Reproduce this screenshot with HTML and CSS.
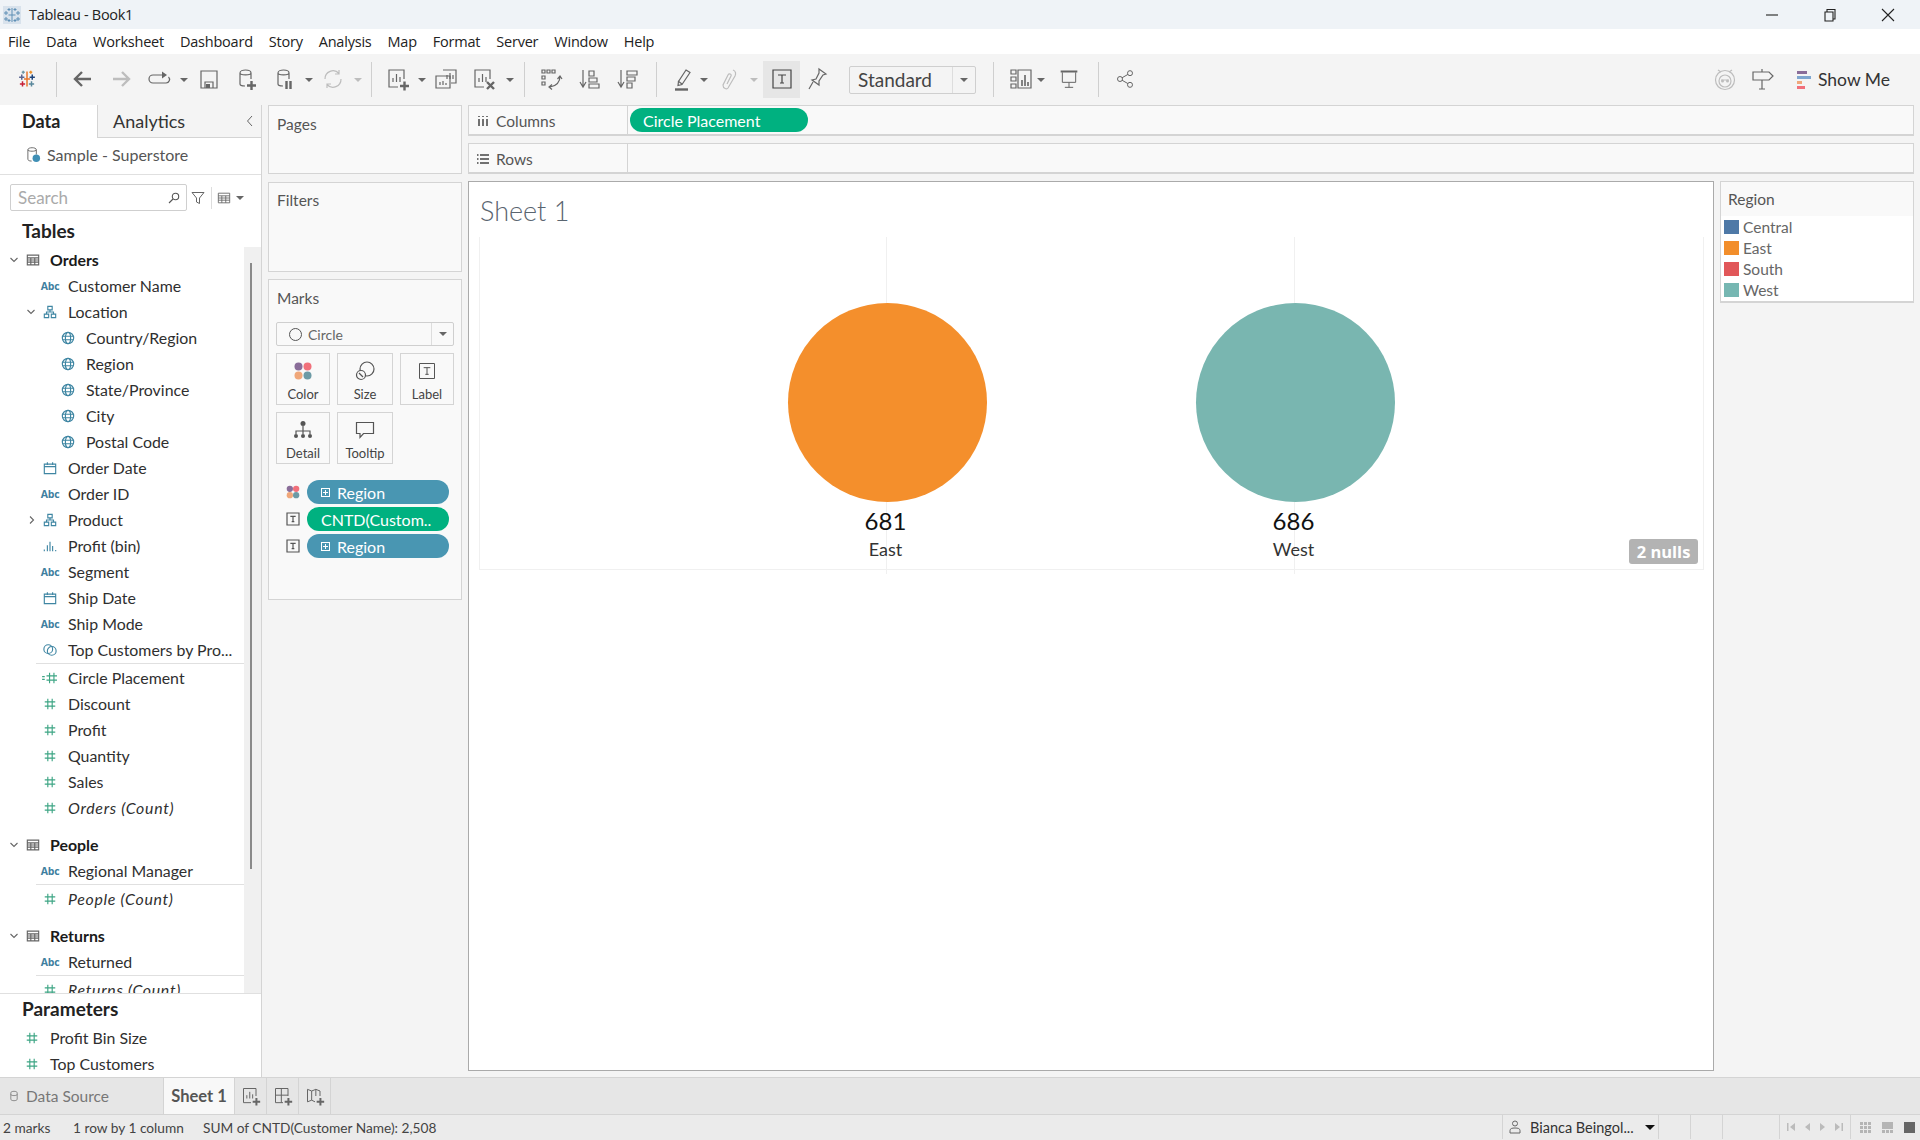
FILE: index.html
```html
<!DOCTYPE html>
<html lang="en">
<head>
    <meta charset="UTF-8">
    <meta name="viewport" content="width=device-width, initial-scale=1.0">
    <title>Tableau - Book1</title>
    <link rel="stylesheet" href="styles.css">
</head>
<body>
    <svg class="sprite">
        <symbol id="i-hash" viewBox="0 0 16 16"><path d="M5.5 2v12M10.5 2v12M2 5.5h12M2 10.5h12"/></symbol>
        <symbol id="i-calc" viewBox="0 0 20 16"><path d="M9.5 2v12M14.5 2v12M6 5.5h12M6 10.5h12M1 6.5h3M1 9.5h3"/></symbol>
        <symbol id="i-globe" viewBox="0 0 16 16"><circle cx="8" cy="8" r="6.5"/><ellipse cx="8" cy="8" rx="3" ry="6.5"/><path d="M2 6h12M2 10h12"/></symbol>
        <symbol id="i-hier" viewBox="0 0 16 16"><path d="M5.5 1.5h5v4h-5zM1.500 10.500h5v4h-5zM9.500 10.500h5v4h-5zM8 5.500V8M4 10.500V8h8v2.500"/></symbol>
        <symbol id="i-cal" viewBox="0 0 16 16"><path d="M1.500 3.500h13v11h-13zM1.500 6.500h13M5 1.500v3M11 1.500v3"/></symbol>
        <symbol id="i-table" viewBox="0 0 16 16"><path d="M1.500 2.500h13v11h-13zM1.500 5.500h13M1.500 8h13M1.500 10.500h13M5.500 5.500v8M10 5.500v8"/></symbol>
        <symbol id="i-bin" viewBox="0 0 16 16"><path d="M1.500 14v-2M5 14V7M8 14V3M11 14V8M14.500 14v-1.500"/></symbol>
        <symbol id="i-set" viewBox="0 0 16 16"><circle cx="6" cy="7" r="5"/><circle cx="10" cy="9" r="5"/></symbol>
        <symbol id="i-dbplus" viewBox="0 0 24 24"><path d="M5 6c0-4 11-4 11 0v6M5 6c0 2.500 11 2.500 11 0M5 6v11c0 1.500 2 2 5 2"/><path class="thick" d="M12 18.500h9M16.500 14v9"/></symbol>
        <symbol id="i-dbpause" viewBox="0 0 24 24"><path d="M5 6c0-4 11-4 11 0v6M5 6c0 2.500 11 2.500 11 0M5 6v11c0 1.500 2 2 5 2"/><path class="thick" d="M13.500 14v8M17.500 14v8"/></symbol>
        <symbol id="i-back" viewBox="0 0 24 24"><path class="thick" d="M20 12H4M11 5l-7 7 7 7"/></symbol>
        <symbol id="i-forward" viewBox="0 0 24 24"><path class="thick" d="M4 12h16M13 5l7 7-7 7"/></symbol>
        <symbol id="i-replay" viewBox="0 0 24 24"><path d="M15 8H6a3.500 3.500 0 0 0 0 8h13a3.500 3.500 0 0 0 2.500-6"/><path class="solid" d="M15 4.500l5 3.500-5 3.500z"/></symbol>
        <symbol id="i-save" viewBox="0 0 24 24"><path d="M4 4h16v17H4zM8 21v-6h8v6"/><path class="solid" d="M9 17h4v4H9z"/></symbol>
        <symbol id="i-refresh" viewBox="0 0 24 24"><path d="M4 12a8 8 0 0 1 14-5.500M20 12a8 8 0 0 1-14 5.500M18 3v4h-4M6 21v-4h4"/></symbol>
        <symbol id="i-sheetadd" viewBox="0 0 24 24"><path d="M12 20H3V3h15v9"/><path d="M7 15v-4M10.500 15V7M14 15v-5"/><path class="thick" d="M14 19h9M18.500 14.500v9"/></symbol>
        <symbol id="i-dup" viewBox="0 0 24 24"><path d="M9 3h13v13h-5M2 9h14v12H2z"/><path d="M13 12V8M16 12V6M19 12V8M6 18v-3M9 18v-4M12 18v-2"/></symbol>
        <symbol id="i-clear" viewBox="0 0 24 24"><path d="M12 20H3V3h15v9"/><path d="M7 15v-4M10.500 15V7M14 15v-5"/><path class="thick" d="M15 15l7 7M22 15l-7 7"/></symbol>
        <symbol id="i-swap" viewBox="0 0 24 24"><path d="M3 3h3v3H3zM8 3h3v3H8zM13 3h3v3h-3zM3 9h3v3H3zM3 15h3v3H3z"/><path d="M21 9c0 6-4 10-10 11M18.500 12l2.500-3 2 3M13 17.500L10 20l3 2.500"/></symbol>
        <symbol id="i-sortasc" viewBox="0 0 24 24"><path d="M6 3v16M3 15l3 5 3-5"/><path d="M12 4h5v5h-5zM12 11h8v4h-8zM12 17h10v4H12z"/></symbol>
        <symbol id="i-sortdesc" viewBox="0 0 24 24"><path d="M6 3v16M3 15l3 5 3-5"/><path d="M12 4h10v4H12zM12 10h8v4h-8zM12 16h5v5h-5z"/></symbol>
        <symbol id="i-pencil" viewBox="0 0 24 24"><path d="M15 3l4 2.500-8 12-4 1 .500-4zM7 14l4 3"/><path class="thick" d="M4 22.500h13"/></symbol>
        <symbol id="i-clip" viewBox="0 0 24 24"><path d="M16 3c3 1 3 4 2 6l-7 12c-1 1.500-5 1-5-3l5-10c1-2 4-1 3 1l-4 8"/></symbol>
        <symbol id="i-tbox" viewBox="0 0 24 24"><path d="M3 3h18v18H3zM8 8h8M12 8v8M10 16h4"/></symbol>
        <symbol id="i-pin" viewBox="0 0 24 24"><path d="M14 2l7 5-3 1-4 6 0 4-7-5 4-1 3-6zM8 15l-4 7"/></symbol>
        <symbol id="i-showme" viewBox="0 0 24 24"><path d="M3 3h5v4H3zM3 10h5v4H3zM3 17h5v4H3zM10 3h13v18H10z"/><path class="thin" d="M14 19v-6M17 19V8M20 19v-4"/></symbol>
        <symbol id="i-present" viewBox="0 0 24 24"><path class="thick" d="M2 3h20"/><path d="M4 4v12h16V4M12 16v6M7 22h10"/></symbol>
        <symbol id="i-share" viewBox="0 0 24 24"><circle cx="18" cy="5" r="3"/><circle cx="6" cy="12" r="3"/><circle cx="18" cy="19" r="3"/><path d="M8.500 10.500l7-4M8.500 13.500l7 4"/></symbol>
        <symbol id="i-sign" viewBox="0 0 24 24"><path d="M2 5h16l4 4-4 4H2zM11 13v9M8 22h6M11 2v3"/></symbol>
        <symbol id="i-robot" viewBox="0 0 24 24"><circle cx="12" cy="13" r="9.500"/><circle cx="12" cy="14" r="6"/><path d="M8 13h8M5 3l3 2M19 3l-3 2"/><circle class="solid" cx="9.500" cy="14" r="1.500"/><circle class="solid" cx="14.500" cy="14" r="1.500"/></symbol>
    </svg>

    <div class="titlebar">
        <svg class="app-logo" viewBox="0 0 18 18">
            <rect width="18" height="18" fill="#d8e2ec"/>
            <path d="M9 2v14M5.500 9h7M3 5v4M1 7h4M15 5v4M13 7h4M3 11v4M1 13h4M15 11v4M13 13h4M6 2v3M4.500 3.500h3M12 2v3M10.500 3.500h3M6 13v3M4.500 14.500h3M12 13v3M10.500 14.500h3" fill="none" stroke="#5e8fb5"/>
        </svg>
        <span class="app-title">Tableau - Book1</span>
        <div class="winctl">
            <svg viewBox="0 0 14 14"><path d="M1 7h12"/></svg>
            <svg viewBox="0 0 14 14"><path d="M2 4h8v9H2zM4 4V1.500h8V11h-2"/></svg>
            <svg viewBox="0 0 14 14"><path d="M1 1l12 12M13 1L1 13"/></svg>
        </div>
    </div>

    <div class="menubar">
        <span>File</span><span>Data</span><span>Worksheet</span><span>Dashboard</span><span>Story</span><span>Analysis</span><span>Map</span><span>Format</span><span>Server</span><span>Window</span><span>Help</span>
    </div>

    <div class="toolbar">
        <div class="tool">
            <svg class="logo" viewBox="0 0 24 24">
                <path d="M12 2v20M8 12h8" stroke="#e8762d"/><path d="M5 6v7M1.500 9.500h7" stroke="#5b6591"/><path d="M19 6v7M15.500 9.500h7" stroke="#1f447a"/><path d="M6 15v7M2.500 18.500h7" stroke="#c72037"/><path d="M18 15v7M14.500 18.500h7" stroke="#59879b"/><path d="M7 1v4M5 3h4" stroke="#7099a6"/><path d="M17 1v4M15 3h4" stroke="#eb912b"/>
            </svg>
        </div>
        <i class="sep first"></i>
        <div class="tool"><svg><use href="#i-back"/></svg></div>
        <div class="tool off"><svg><use href="#i-forward"/></svg></div>
        <div class="tool"><svg><use href="#i-replay"/></svg></div>
        <i class="caret"></i>
        <div class="tool"><svg><use href="#i-save"/></svg></div>
        <div class="tool"><svg><use href="#i-dbplus"/></svg></div>
        <div class="tool"><svg><use href="#i-dbpause"/></svg></div>
        <i class="caret tight"></i>
        <div class="tool off"><svg><use href="#i-refresh"/></svg></div>
        <i class="caret off"></i>
        <i class="sep"></i>
        <div class="tool"><svg><use href="#i-sheetadd"/></svg></div>
        <i class="caret tight"></i>
        <div class="tool"><svg><use href="#i-dup"/></svg></div>
        <div class="tool"><svg><use href="#i-clear"/></svg></div>
        <i class="caret loose"></i>
        <i class="sep"></i>
        <div class="tool"><svg><use href="#i-swap"/></svg></div>
        <div class="tool"><svg><use href="#i-sortasc"/></svg></div>
        <div class="tool"><svg><use href="#i-sortdesc"/></svg></div>
        <i class="sep wide"></i>
        <div class="tool"><svg><use href="#i-pencil"/></svg></div>
        <i class="caret pull"></i>
        <div class="tool off"><svg><use href="#i-clip"/></svg></div>
        <i class="caret off"></i>
        <div class="tool active"><svg><use href="#i-tbox"/></svg></div>
        <div class="tool pin"><svg><use href="#i-pin"/></svg></div>
        <div class="fit-select"><span>Standard</span><b><i class="caret"></i></b></div>
        <i class="sep"></i>
        <div class="tool"><svg><use href="#i-showme"/></svg></div>
        <i class="caret pull"></i>
        <div class="tool push sm"><svg><use href="#i-present"/></svg></div>
        <i class="sep after-present"></i>
        <div class="tool sm"><svg><use href="#i-share"/></svg></div>
        <div class="toolbar-right">
            <div class="tool off"><svg><use href="#i-robot"/></svg></div>
            <div class="tool"><svg><use href="#i-sign"/></svg></div>
            <div class="showme">
                <svg viewBox="0 0 14 18"><rect width="10" height="3" fill="#8a6d99"/><rect y="5" width="14" height="3" fill="#7fa6cf"/><rect y="10" width="5" height="3" fill="#f0a77a"/><rect y="15" width="8" height="3" fill="#f1707b"/></svg>
                Show Me
            </div>
        </div>
    </div>

    <div class="main">
        <aside class="data-pane">
            <div class="tabs">
                <div class="tab on">Data</div>
                <div class="tab">Analytics<svg viewBox="0 0 8 12"><path d="M6 1L1.500 6 6 11"/></svg></div>
            </div>
            <div class="source">
                <svg class="src-ico" viewBox="0 0 16 18"><path d="M2 4c0-3 9-3 9 0v5M2 4c0 2 9 2 9 0M2 4v10c0 1 1 2 4 2" fill="none" stroke="#666"/><circle cx="11" cy="13" r="4" fill="#3f8fb5"/></svg>
                Sample - Superstore
            </div>
            <div class="search-row">
                <div class="search">Search
                    <svg viewBox="0 0 12 12"><circle cx="7.500" cy="4.500" r="3.200"/><path d="M5 7l-4 4"/></svg>
                </div>
                <svg class="funnel" viewBox="0 0 14 14"><path d="M1 1.500h12L8.500 7v5.500L5.500 11V7z"/></svg>
                <i class="vline"></i>
                <svg class="listview"><use href="#i-table"/></svg>
                <i class="caret"></i>
            </div>
            <h3 class="pane-head">Tables</h3>
            <div class="tree-wrap">
                <div class="tree">
                    <div class="row l0"><i class="chev"><svg viewBox="0 0 10 10"><path d="M1.500 3L5 6.500 8.500 3"/></svg></i><svg class="ico tbl"><use href="#i-table"/></svg><b>Orders</b></div>
                    <div class="row l1"><span class="abc">Abc</span>Customer Name</div>
                    <div class="row l1p"><i class="chev"><svg viewBox="0 0 10 10"><path d="M1.500 3L5 6.500 8.500 3"/></svg></i><svg class="ico dim"><use href="#i-hier"/></svg>Location</div>
                    <div class="row l2"><svg class="ico dim"><use href="#i-globe"/></svg>Country/Region</div>
                    <div class="row l2"><svg class="ico dim"><use href="#i-globe"/></svg>Region</div>
                    <div class="row l2"><svg class="ico dim"><use href="#i-globe"/></svg>State/Province</div>
                    <div class="row l2"><svg class="ico dim"><use href="#i-globe"/></svg>City</div>
                    <div class="row l2"><svg class="ico dim"><use href="#i-globe"/></svg>Postal Code</div>
                    <div class="row l1"><svg class="ico dim"><use href="#i-cal"/></svg>Order Date</div>
                    <div class="row l1"><span class="abc">Abc</span>Order ID</div>
                    <div class="row l1p"><i class="chev"><svg viewBox="0 0 10 10"><path d="M4 1.500L7.500 5 4 8.500"/></svg></i><svg class="ico dim"><use href="#i-hier"/></svg>Product</div>
                    <div class="row l1"><svg class="ico dim"><use href="#i-bin"/></svg>Profit (bin)</div>
                    <div class="row l1"><span class="abc">Abc</span>Segment</div>
                    <div class="row l1"><svg class="ico dim"><use href="#i-cal"/></svg>Ship Date</div>
                    <div class="row l1"><span class="abc">Abc</span>Ship Mode</div>
                    <div class="row l1"><svg class="ico dim"><use href="#i-set"/></svg>Top Customers by Pro...</div>
                    <div class="rule"></div>
                    <div class="row l1"><svg class="ico mea calc"><use href="#i-calc"/></svg>Circle Placement</div>
                    <div class="row l1"><svg class="ico mea"><use href="#i-hash"/></svg>Discount</div>
                    <div class="row l1"><svg class="ico mea"><use href="#i-hash"/></svg>Profit</div>
                    <div class="row l1"><svg class="ico mea"><use href="#i-hash"/></svg>Quantity</div>
                    <div class="row l1"><svg class="ico mea"><use href="#i-hash"/></svg>Sales</div>
                    <div class="row l1 it"><svg class="ico mea"><use href="#i-hash"/></svg>Orders (Count)</div>

                    <div class="row l0 group"><i class="chev"><svg viewBox="0 0 10 10"><path d="M1.500 3L5 6.500 8.500 3"/></svg></i><svg class="ico tbl"><use href="#i-table"/></svg><b>People</b></div>
                    <div class="row l1"><span class="abc">Abc</span>Regional Manager</div>
                    <div class="rule"></div>
                    <div class="row l1 it"><svg class="ico mea"><use href="#i-hash"/></svg>People (Count)</div>

                    <div class="row l0 group"><i class="chev"><svg viewBox="0 0 10 10"><path d="M1.500 3L5 6.500 8.500 3"/></svg></i><svg class="ico tbl"><use href="#i-table"/></svg><b>Returns</b></div>
                    <div class="row l1"><span class="abc">Abc</span>Returned</div>
                    <div class="rule"></div>
                    <div class="row l1 it"><svg class="ico mea"><use href="#i-hash"/></svg>Returns (Count)</div>
                </div>
                <div class="scroll"><div class="thumb"></div></div>
            </div>
            <div class="params">
                <h3 class="pane-head">Parameters</h3>
                <div class="row p"><svg class="ico mea"><use href="#i-hash"/></svg>Profit Bin Size</div>
                <div class="row p"><svg class="ico mea"><use href="#i-hash"/></svg>Top Customers</div>
            </div>
        </aside>

        <section class="cards">
            <div class="card pages"><h4>Pages</h4></div>
            <div class="card filters"><h4>Filters</h4></div>
            <div class="card marks">
                <h4>Marks</h4>
                <div class="mark-type">
                    <span class="mt-label"><i class="ring"></i>Circle</span>
                    <b><i class="caret"></i></b>
                </div>
                <div class="mark-btns">
                    <div class="mbtn">
                        <svg viewBox="0 0 20 20"><circle cx="5.500" cy="5.500" r="4" fill="#8a6d99"/><circle cx="14.500" cy="5.500" r="4" fill="#f1707b"/><circle cx="5.500" cy="14.500" r="4" fill="#f0a77a"/><circle cx="14.500" cy="14.500" r="4" fill="#6c9aa5"/></svg>
                        Color
                    </div>
                    <div class="mbtn">
                        <svg class="ln" viewBox="0 0 20 20"><circle cx="12" cy="8" r="7"/><circle cx="6" cy="14" r="4.500" fill="#f9f9f9"/><path d="M4 12l4 4"/></svg>
                        Size
                    </div>
                    <div class="mbtn">
                        <svg class="ln" viewBox="0 0 24 24"><use href="#i-tbox"/></svg>
                        Label
                    </div>
                    <div class="mbtn">
                        <svg class="ln" viewBox="0 0 20 20"><circle class="solid" cx="10" cy="3.500" r="2.500"/><path d="M10 6v8M3 14v-3h14v3"/><circle class="solid" cx="3" cy="16" r="2"/><circle class="solid" cx="10" cy="16" r="2"/><circle class="solid" cx="17" cy="16" r="2"/></svg>
                        Detail
                    </div>
                    <div class="mbtn">
                        <svg class="ln" viewBox="0 0 20 20"><path d="M1.500 2.500h17v11h-10l-3.500 4v-4H1.500z"/></svg>
                        Tooltip
                    </div>
                </div>
                <div class="mark-pills">
                    <div class="mp">
                        <svg class="mp-ico" viewBox="0 0 20 20"><circle cx="5.500" cy="5.500" r="4.500" fill="#8a6d99"/><circle cx="14.500" cy="5.500" r="4.500" fill="#f1707b"/><circle cx="5.500" cy="14.500" r="4.500" fill="#f0a77a"/><circle cx="14.500" cy="14.500" r="4.500" fill="#6c9aa5"/></svg>
                        <div class="pill blue"><i class="plus"></i>Region</div>
                    </div>
                    <div class="mp">
                        <svg class="mp-ico ln" viewBox="0 0 24 24"><use href="#i-tbox"/></svg>
                        <div class="pill green">CNTD(Custom..</div>
                    </div>
                    <div class="mp">
                        <svg class="mp-ico ln" viewBox="0 0 24 24"><use href="#i-tbox"/></svg>
                        <div class="pill blue"><i class="plus"></i>Region</div>
                    </div>
                </div>
            </div>
        </section>

        <section class="work">
            <div class="shelf">
                <div class="shelf-label">
                    <svg viewBox="0 0 12 12"><path d="M2 1v1M2 4v7M6 1v1M6 4v7M10 1v1M10 4v7"/></svg>
                    Columns
                </div>
                <div class="pill green long">Circle Placement</div>
            </div>
            <div class="shelf">
                <div class="shelf-label">
                    <svg viewBox="0 0 12 12"><path d="M0 2h1.500M3 2h9M0 6h1.500M3 6h9M0 10h1.500M3 10h9"/></svg>
                    Rows
                </div>
            </div>
            <div class="stage">
                <div class="viz">
                    <h1 class="sheet-title">Sheet 1</h1>
                    <div class="plot">
                        <div class="mark east">
                            <div class="circle"></div>
                            <div class="val">681</div>
                            <div class="lbl">East</div>
                        </div>
                        <div class="mark west">
                            <div class="circle"></div>
                            <div class="val">686</div>
                            <div class="lbl">West</div>
                        </div>
                        <div class="nulls">2 nulls</div>
                    </div>
                </div>
                <div class="legend">
                    <div class="legend-head">Region</div>
                    <div class="legend-item"><i class="sw central"></i>Central</div>
                    <div class="legend-item"><i class="sw east-c"></i>East</div>
                    <div class="legend-item"><i class="sw south"></i>South</div>
                    <div class="legend-item"><i class="sw west-c"></i>West</div>
                </div>
            </div>
        </section>
    </div>

    <div class="tabbar">
        <div class="ds-tab">
            <svg viewBox="0 0 10 14"><path d="M1 3c0-2.500 8-2.500 8 0v8c0 2.500-8 2.500-8 0zM1 5c0 2 8 2 8 0"/></svg>
            Data Source
        </div>
        <div class="sheet-tab">Sheet 1</div>
        <div class="new-tab"><svg class="tab-ico"><use href="#i-sheetadd"/></svg></div>
        <div class="new-tab">
            <svg class="tab-ico" viewBox="0 0 24 24"><path d="M12 20H3V3h15v9M3 11h15M10 3v17"/><path class="thick" d="M14 19h9M18.500 14.500v9"/></svg>
        </div>
        <div class="new-tab">
            <svg class="tab-ico" viewBox="0 0 24 24"><path d="M12 19l-4-2-5 2V4l5 2 5-2 5 2v6M8 6v11M13 4v8"/><path class="thick" d="M14 19h9M18.500 14.500v9"/></svg>
        </div>
    </div>

    <div class="statusbar">
        <span class="st a">2 marks</span>
        <span class="st b">1 row by 1 column</span>
        <span class="st">SUM of CNTD(Customer Name): 2,508</span>
        <div class="st-right">
            <div class="st-cell user">
                <svg viewBox="0 0 12 14"><circle cx="6" cy="3.500" r="2.500"/><path d="M1 13v-2.500C1 8.500 3 8 6 8s5 .5 5 2.500V13z"/></svg>
                <span>Bianca Beingol...</span>
                <i class="caret dark"></i>
            </div>
            <div class="st-cell w32"></div>
            <div class="st-cell w32"></div>
            <div class="st-cell w57"></div>
            <div class="st-cell nav">
                <svg viewBox="0 0 10 10"><path d="M1 1h1.500v8H1zM9 1v8L4 5z"/></svg>
                <svg viewBox="0 0 10 10"><path d="M8 1v8L3 5z"/></svg>
                <svg viewBox="0 0 10 10"><path d="M2 1v8l5-4z"/></svg>
                <svg viewBox="0 0 10 10"><path d="M1 1v8l5-4zM7.500 1H9v8H7.500z"/></svg>
            </div>
            <div class="st-cell views">
                <svg viewBox="0 0 11 11"><path d="M0 0h3v3H0zM4 0h3v3H4zM8 0h3v3H8zM0 4h3v3H0zM4 4h3v3H4zM8 4h3v3H8zM0 8h3v3H0zM4 8h3v3H4zM8 8h3v3H8z"/></svg>
                <svg viewBox="0 0 11 11"><path d="M0 0h11v7H0zM0 8h3v3H0zM4 8h3v3H4zM8 8h3v3H8z"/></svg>
                <svg class="cur" viewBox="0 0 11 11"><path d="M0 0h11v11H0z"/></svg>
            </div>
        </div>
    </div>
</body>
</html>
```

FILE: styles.css
```css
*{box-sizing:border-box;padding:0;margin:0;}
html,body{width:1920px;height:1140px;overflow:hidden;}
body{display:flex;flex-direction:column;background:#f4f4f4;color:#2b2b2b;font:15px Lato,"Liberation Sans",sans-serif;}
.sprite{display:none;}
i{font-style:normal;display:block;}
h1,h3,h4{font-weight:normal;}
svg{display:block;flex:none;}

/* shared svg strokes */
.tool svg,.ico,.ln,.tab-ico{fill:none;stroke:currentColor;stroke-width:1.2;}
.thick{stroke-width:2.4;}
.thin{stroke-width:1.6;}
.solid{fill:currentColor;stroke:none;}

/* title + menu */
.titlebar{height:29px;flex:none;background:#eff3f7;display:flex;align-items:center;padding-left:3px;}
.app-logo{width:18px;height:18px;}
.app-title{margin-left:8px;font:14.5px "Open Sans",sans-serif;color:#222;letter-spacing:-.3px;}
.winctl{margin-left:auto;display:flex;gap:44px;padding-right:25px;}
.winctl svg{width:14px;height:14px;fill:none;stroke:#222;stroke-width:1.1;}
.menubar{height:25px;flex:none;background:#fff;display:flex;align-items:center;gap:16px;padding-left:8px;font:14.5px "Open Sans",sans-serif;color:#222;letter-spacing:-.22px;}

/* toolbar */
.toolbar{height:51px;flex:none;background:#f4f4f4;display:flex;align-items:center;padding-left:8px;color:#666;}
.tool{width:38px;height:37px;display:flex;align-items:center;justify-content:center;flex:none;color:#666;margin-top:-1px;}
.tool svg{width:24px;height:24px;}
.tool.sm svg{width:20px;height:20px;}
.tool.off{color:#bdbdbd;}
.tool.active{width:37px;margin-left:3px;background:#e6e6e6;color:#444;}
.tool.pin{width:34px;}
.tool.push{margin-left:3px;}
.tool svg.logo{width:18px;height:18px;stroke-width:2;}
.sep{width:1px;height:35px;background:#cfcfcf;margin:0 7px;flex:none;}
.sep.first{margin-left:10px;}
.sep.wide{margin-left:10px;}
.sep.after-present{margin-left:10px;}
.caret{width:12px;height:4px;flex:none;}
.caret::after{content:"";display:block;margin:0 auto;width:0;height:0;border:4px solid transparent;border-top-color:#666;border-bottom:0;}
.caret.off::after{border-top-color:#bdbdbd;}
.caret.tight{width:10px;}
.caret.loose{width:14px;}
.caret.pull{margin-left:-4px;}
.caret.dark::after{border-top-color:#111;border-width:5px;border-bottom:0;}
.fit-select{width:127px;height:28px;margin-left:15px;border:1px solid #cfcfcf;border-radius:2px;display:flex;align-items:center;font-size:19px;color:#444;margin-right:10px;}
.fit-select span{flex:1;padding-left:8px;}
.fit-select b{width:23px;height:100%;border-left:1px solid #ddd;display:flex;align-items:center;justify-content:center;}
.toolbar-right{margin-left:auto;display:flex;align-items:center;padding-right:30px;}
.showme{display:flex;align-items:center;gap:7px;margin-left:15px;font-size:17.5px;color:#333;}
.showme svg{width:14px;height:18px;}

/* main */
.main{height:972px;flex:none;display:flex;align-items:flex-start;}

/* data pane */
.data-pane{width:262px;height:100%;background:#fff;border-right:1px solid #d4d4d4;display:flex;flex-direction:column;flex:none;}
.tabs{height:33px;display:flex;flex:none;}
.tab{flex:1;background:#f4f4f4;border-bottom:1px solid #d4d4d4;border-left:1px solid #d4d4d4;padding-left:15px;font-size:18px;line-height:33px;color:#333;display:flex;align-items:center;justify-content:space-between;}
.tab svg{width:8px;height:12px;fill:none;stroke:#666;margin-right:7px;}
.tab.on{flex:none;width:97px;background:#fff;border:0;font-weight:bold;font-size:18px;padding-left:22px;color:#222;}
.source{height:37px;flex:none;border-bottom:1px solid #e0e0e0;display:flex;align-items:center;padding:0 0 3px 26px;gap:6px;font-size:16px;color:#555;}
.src-ico{width:15px;height:17px;}
.search-row{height:37px;flex:none;display:flex;align-items:center;padding:8px 0 0 10px;}
.search{width:177px;height:27px;border:1px solid #cfcfcf;border-radius:2px;padding-left:7px;line-height:25px;font-size:17px;color:#aaa;display:flex;align-items:center;justify-content:space-between;padding-right:6px;}
.search svg{width:12px;height:12px;fill:none;stroke:#555;stroke-width:1.1;}
.funnel{width:14px;height:14px;margin-left:4px;fill:none;stroke:#666;}
.vline{width:1px;height:22px;background:#ddd;margin:0 5px 0 6px;}
.listview{width:14px;height:14px;fill:none;stroke:#666;stroke-width:1;}
.search-row .caret{margin-left:3px;}
.pane-head{height:35px;flex:none;font-weight:bold;font-size:19px;line-height:38px;padding-left:22px;color:#222;}
.tree-wrap{height:746px;flex:none;display:flex;overflow:hidden;}
.tree{width:244px;flex:none;}
.scroll{width:17px;flex:none;background:#f0f0f0;padding:16px 0 0 6px;}
.thumb{width:2px;height:606px;background:#8a8a8a;}
.row{height:26px;display:flex;align-items:center;white-space:nowrap;font-size:15.9px;color:#2f2f2f;padding-bottom:1px;}
.row b{font-size:15.9px;color:#1a1a1a;}
.row.it{font-style:italic;letter-spacing:.7px;}
.row.group{margin-top:11px;}
.ico{width:14px;height:14px;flex:none;stroke-width:1.3;}
.ico.tbl{color:#666;margin-right:10px;margin-left:3px;}
.ico.dim{color:#3f86a3;margin:0 11px 0 3px;}
.ico.mea{color:#3da584;margin:0 11px 0 3px;}
.ico.calc{width:18px;margin:0 9px 0 1px;}
.chev{width:18px;height:10px;flex:none;}
.chev svg{width:10px;height:10px;margin:0 auto;fill:none;stroke:#666;stroke-width:1.1;}
.l0{padding-left:5px;}
.l1{padding-left:40px;}
.l1p{padding-left:22px;}
.l2{padding-left:58px;}
.abc{width:20px;margin-right:8px;font-size:10.5px;font-weight:bold;color:#3f7f9f;text-align:center;flex:none;font-family:"Open Sans",sans-serif;letter-spacing:-.2px;font-style:normal;}
.rule{height:1px;margin:0 0 1px 36px;background:#e0e0e0;}
.params{border-top:1px solid #e0e0e0;flex:1;overflow:hidden;}
.params .pane-head{height:31px;line-height:30px;}
.row.p{padding-left:22px;}

/* cards */
.cards{width:194px;flex:none;margin-left:6px;display:flex;flex-direction:column;gap:7px;}
.card{background:#f9f9f9;border:1px solid #d4d4d4;padding:0 7px;}
.card h4{font-size:15.5px;color:#555;padding:9px 0 0 1px;}
.pages{height:69px;margin-bottom:1px;}
.filters{height:90px;}
.filters h4{padding-top:8px;}
.marks{height:321px;}
.mark-type{height:24px;margin-top:15px;border:1px solid #cfcfcf;border-radius:2px;display:flex;align-items:center;font-size:14px;color:#666;}
.mt-label{flex:1;display:flex;align-items:center;gap:6px;padding-left:12px;}
.ring{width:13px;height:13px;border:1.5px solid #555;border-radius:50%;}
.mark-type b{width:22px;height:100%;border-left:1px solid #ddd;display:flex;align-items:center;justify-content:center;}
.mark-btns{display:grid;grid-template-columns:54px 56px 54px;column-gap:7px;row-gap:7px;margin-top:7px;}
.mbtn{height:52px;border:1px solid #d4d4d4;display:flex;flex-direction:column;align-items:center;padding-top:7px;font-size:13px;color:#444;gap:5px;}
.mbtn svg{width:20px;height:20px;}
.ln{stroke:#555;color:#555;fill:none;stroke-width:1.2;}
.mark-pills{margin-top:16px;display:flex;flex-direction:column;gap:3px;padding-left:10px;}
.mp{display:flex;align-items:center;gap:7px;}
.mp-ico{width:14px;height:14px;flex:none;}
.mp-ico.ln{width:16px;height:16px;margin:0 -1px;stroke-width:1.8;}
.pill{height:24px;border-radius:12px;color:#fff;display:flex;align-items:center;font-size:16px;white-space:nowrap;}
.mp .pill{width:142px;padding-left:14px;}
.pill.blue{background:#4996b2;}
.pill.green{background:#00b180;}
.plus{width:9px;height:9px;border:1px solid #fff;margin-right:7px;background:linear-gradient(#fff,#fff) center/5px 1px no-repeat,linear-gradient(#fff,#fff) center/1px 5px no-repeat;}

/* shelves + view */
.work{width:1446px;flex:none;margin-left:6px;display:flex;flex-direction:column;gap:7px;}
.shelf{height:31px;background:#f9f9f9;border:1px solid #d4d4d4;border-width:1px 1px 2px 1px;display:flex;align-items:center;}
.shelf-label{width:159px;height:100%;border-right:1px solid #d4d4d4;display:flex;align-items:center;gap:7px;padding:1px 0 0 8px;font-size:15.5px;color:#555;flex:none;}
.shelf-label svg{width:12px;height:12px;fill:none;stroke:#444;stroke-width:1.5;}
.pill.long{width:178px;margin-left:2px;padding-left:13px;}
.stage{display:flex;gap:6px;align-items:flex-start;}
.viz{width:1246px;height:890px;background:#fff;border:1px solid #aaa;padding:0 10px;}
.sheet-title{height:55px;font-size:27px;font-weight:300;color:#5a6570;line-height:44px;padding-left:1px;padding-top:7px;}
.plot{position:relative;width:1225px;height:333px;border:1px solid #f0f0f0;border-top:0;}
.mark{position:absolute;top:0;bottom:-5px;width:200px;display:flex;flex-direction:column;align-items:center;}
.mark::before{content:"";position:absolute;left:99px;top:0;bottom:0;width:1px;background:#f0f0f0;}
.mark.east{left:307px;}
.mark.west{left:715px;}
.circle{width:199px;height:199px;border-radius:50%;margin-top:66px;position:relative;}
.east .circle{background:#f48f2c;}
.west .circle{background:#79b6b0;}
.val{font-size:24px;color:#111;line-height:30px;margin-top:4px;padding-right:3px;position:relative;}
.lbl{font-size:18px;color:#333;line-height:24px;margin-top:1px;padding-right:3px;position:relative;}
.nulls{position:absolute;right:5px;top:302px;width:69px;height:25px;border-radius:3px;background:#b3b3b3;color:#fff;font:bold 16.5px/25px "Open Sans",sans-serif;text-align:center;}
.legend{width:194px;height:122px;background:#fff;border:1px solid #d4d4d4;border-width:1px 1px 2px 1px;}
.legend-head{height:34px;background:#f9f9f9;padding-left:7px;font-size:15.5px;line-height:34px;color:#555;}
.legend-item{height:21px;display:flex;align-items:center;gap:4px;padding-left:3px;font-size:15.5px;color:#666;}
.sw{width:15px;height:14px;}
.central{background:#4e79a7;}
.east-c{background:#f28e2b;}
.south{background:#e15759;}
.west-c{background:#76b7b2;}

/* bottom */
.tabbar{height:37px;flex:none;background:#e6e6e6;border-top:1px solid #d4d4d4;display:flex;}
.ds-tab{width:163px;display:flex;align-items:center;gap:8px;padding-left:10px;font-size:15.5px;color:#777;}
.ds-tab svg{width:8px;height:12px;fill:none;stroke:#777;}
.sheet-tab{width:72px;background:#f8f8f8;border:1px solid #d4d4d4;border-width:0 1px;display:flex;align-items:center;justify-content:center;font-weight:bold;font-size:16.5px;color:#555;}
.new-tab{width:32px;border-right:1px solid #d4d4d4;display:flex;align-items:center;justify-content:center;color:#666;}
.tab-ico{width:20px;height:20px;}
.statusbar{height:26px;flex:none;background:#ebebeb;border-top:1px solid #d4d4d4;display:flex;align-items:center;padding:0 0 1px 3px;font-size:13.7px;color:#444;}
.st.a{width:70px;}
.st.b{width:130px;}
.st-right{margin-left:auto;height:100%;display:flex;}
.st-cell{height:100%;border-left:1px solid #d4d4d4;flex:none;display:flex;align-items:center;}
.user{width:156px;padding-left:6px;gap:9px;font-size:14.5px;color:#333;white-space:nowrap;}
.user span{width:105px;}
.user svg{width:12px;height:14px;fill:none;stroke:#666;}
.w32{width:32px;}
.w57{width:57px;}
.nav{width:71px;padding-left:6px;gap:6px;}
.nav svg{width:10px;height:10px;fill:#bbb;}
.views{width:70px;padding-left:9px;gap:11px;}
.views svg{width:11px;height:11px;fill:#b5b5b5;}
.views svg.cur{fill:#666;}
```
